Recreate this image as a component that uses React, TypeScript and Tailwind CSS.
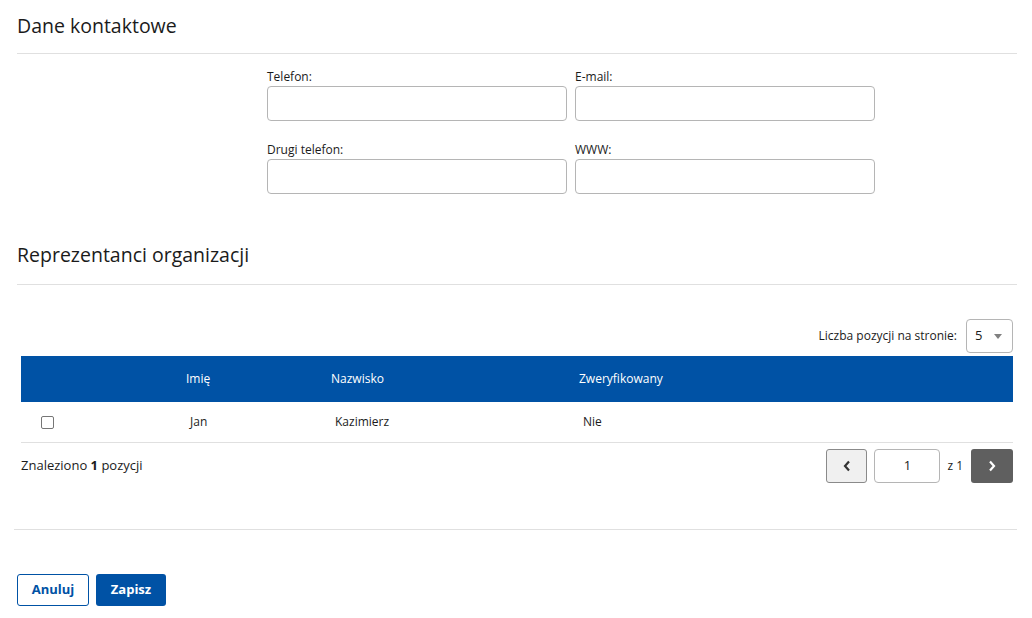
import React from "react";

const font = { fontFamily: '"Open Sans", "Noto Sans", sans-serif' };

function Field({ label }: { label: string }) {
  return (
    <div className="flex flex-col w-[300px]">
      <label className="text-[12px] leading-[16px] text-[#1b1b1b] mb-[1px]">{label}</label>
      <input className="h-[35px] w-full rounded-[4px] border border-[#b5b5b5] bg-white outline-none" />
    </div>
  );
}

export default function App() {
  return (
    <div className="w-[1032px] h-[618px] bg-white text-[#1b1b1b] overflow-hidden" style={font}>
      <div className="px-[17px] pt-[12px]">
        <h2 className="text-[19.5px] leading-[28px] text-[#1b1b1b]">Dane kontaktowe</h2>
        <div className="mt-[13px] h-px bg-[#e0e0e0] w-[1000px]" />
        <div className="pl-[250px] pt-[15px] grid grid-cols-[300px_300px] gap-x-[8px] gap-y-[21px]">
          <Field label="Telefon:" />
          <Field label="E-mail:" />
          <Field label="Drugi telefon:" />
          <Field label="WWW:" />
        </div>
        <h2 className="mt-[47px] text-[19.5px] leading-[28px] text-[#1b1b1b]">Reprezentanci organizacji</h2>
        <div className="mt-[15px] h-px bg-[#e0e0e0] w-[1000px]" />
      </div>

      <div className="pl-[21px] pr-[19px] mt-[34px]">
        <div className="flex justify-end items-center h-[34px] gap-[9px]">
          <span className="text-[12px] text-[#1b1b1b]">Liczba pozycji na stronie:</span>
          <div className="w-[47px] h-[34px] rounded-[4px] border border-[#b5b5b5] flex items-center pl-[8px] pr-[10px] justify-between text-[13px]">
            <span>5</span>
            <svg width="8" height="5" viewBox="0 0 8 5"><path d="M0 0h8L4 5z" fill="#808080" /></svg>
          </div>
        </div>
        <div className="mt-[3px] w-[992px] text-[12px]">
          <div className="h-[46px] bg-[#0052a5] text-white grid grid-cols-[161px_145px_248px_1fr] items-center">
            <div />
            <div className="pl-[4px]">Imię</div>
            <div className="pl-[4px]">Nazwisko</div>
            <div className="pl-[4px]">Zweryfikowany</div>
          </div>
          <div className="h-[41px] border-b border-[#e0e0e0] grid grid-cols-[161px_145px_248px_1fr] items-center text-[#1b1b1b]">
            <div className="pl-[20px] flex items-center">
              <div className="w-[13px] h-[13px] rounded-[2px] border border-[#767676] bg-white" />
            </div>
            <div className="pl-[8px]">Jan</div>
            <div className="pl-[8px]">Kazimierz</div>
            <div className="pl-[8px]">Nie</div>
          </div>
          <div className="flex items-center justify-between mt-[6px]">
            <span className="text-[13px]">Znaleziono <b className="font-bold">1</b> pozycji</span>
            <div className="flex items-center">
              <button className="w-[41px] h-[34px] rounded-[3px] border border-[#8a8a8a] bg-[#f0f0f0] flex items-center justify-center">
                <svg width="8" height="12" viewBox="0 0 8 12"><path d="M6 1.5L2 6l4 4.5" stroke="#333" strokeWidth="2.2" fill="none" /></svg>
              </button>
              <div className="ml-[7px] w-[66px] h-[34px] rounded-[4px] border border-[#b5b5b5] flex items-center justify-center text-[13px] text-[#1b1b1b]">1</div>
              <span className="ml-[7px] mr-[8px] text-[12px]">z 1</span>
              <button className="w-[42px] h-[34px] rounded-[3px] bg-[#5f5f5f] flex items-center justify-center">
                <svg width="8" height="12" viewBox="0 0 8 12"><path d="M2 1.5L6 6l-4 4.5" stroke="#fff" strokeWidth="2.2" fill="none" /></svg>
              </button>
            </div>
          </div>
        </div>
      </div>

      <div className="px-[14px] mt-[46px]">
        <div className="h-px bg-[#e0e0e0] w-[1003px]" />
      </div>
      <div className="px-[17px] mt-[44px] flex gap-[7px]">
        <button className="w-[72px] h-[32px] rounded-[3px] border border-[#0052a5] text-[#0052a5] text-[13px] font-bold bg-white">Anuluj</button>
        <button className="w-[70px] h-[32px] rounded-[3px] bg-[#0052a5] text-white text-[13px] font-bold">Zapisz</button>
      </div>
    </div>
  );
}
